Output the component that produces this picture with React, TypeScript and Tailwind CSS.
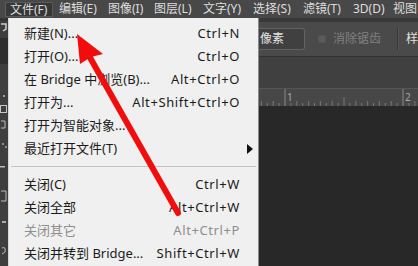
import React from "react";

type Item = { l: string; s?: string; dis?: boolean; sub?: boolean } | "sep";

const items: Item[] = [
  { l: "新建(N)...", s: "Ctrl+N" },
  { l: "打开(O)...", s: "Ctrl+O" },
  { l: "在 Bridge 中浏览(B)...", s: "Alt+Ctrl+O" },
  { l: "打开为...", s: "Alt+Shift+Ctrl+O" },
  { l: "打开为智能对象...", s: "" },
  { l: "最近打开文件(T)", s: "", sub: true },
  "sep",
  { l: "关闭(C)", s: "Ctrl+W" },
  { l: "关闭全部", s: "Alt+Ctrl+W" },
  { l: "关闭其它", s: "Alt+Ctrl+P", dis: true },
  { l: "关闭并转到 Bridge...", s: "Shift+Ctrl+W" },
];

function Ruler() {
  const ticks: React.ReactNode[] = [];
  for (let i = -6; i <= 30; i++) {
    const x = 26 + i * 5.9;
    if (x < 0 || x > 160) continue;
    const m = ((i % 20) + 20) % 20;
    const h = m === 0 ? 17 : m % 10 === 0 ? 9 : m % 2 === 0 ? 5 : 3;
    ticks.push(
      <line key={i} x1={x} x2={x} y1={17 - h} y2={17} stroke={m === 0 ? "#8a8a8a" : "#777"} strokeWidth={1} />
    );
  }
  return (
    <svg width="159" height="17" className="block">
      {ticks}
    </svg>
  );
}

export default function App() {
  const menuTop = ["编辑(E)", "图像(I)", "图层(L)", "文字(Y)", "选择(S)", "滤镜(T)", "3D(D)", "视图"];
  const widths = ["w-[49px]", "w-[46px]", "w-[49px]", "w-[50px]", "w-[50px]", "w-[50px]", "w-[40px]", "w-[24px]"];
  return (
    <div className="relative w-[418px] h-[266px] overflow-hidden bg-[#282828] font-['Noto_Sans','Noto_Sans_CJK_SC',sans-serif]">
      {/* menubar */}
      <div className="flex h-[18px] items-start bg-[#484848] text-[12px] text-[#dedede] whitespace-nowrap">
        <div className="ml-[5px] mt-[2px] flex h-[15px] w-[48px] items-center border border-[#5a5a5a] bg-[#383838] pl-[4px] leading-none">
          文件(F)
        </div>
        <div className="ml-[6px] flex">
          {menuTop.map((t, i) => (
            <div key={t} className={`${widths[i]} flex h-[18px] items-center leading-none`}>
              {t}
            </div>
          ))}
        </div>
      </div>

      <div className="flex h-[248px]">
        {/* left tool strip */}
        <div className="w-[8px] shrink-0 bg-[#3e3e3e]">
          <svg width="8" height="248" className="block">
            <rect x="0" y="0" width="8" height="3" fill="#333" />
            <path d="M1 6 L6 6 L6 11 L3 13" stroke="#cfcfcf" strokeWidth="1.5" fill="none" />
            <rect x="0" y="20" width="8" height="26" fill="#2f2f2f" />
            <circle cx="4" cy="78" r="1" fill="#bbb" />
            <rect x="0.5" y="87.5" width="6" height="7" stroke="#c8c8c8" fill="none" />
            <path d="M1 103 L5 103 L5 110 L1 110" stroke="#bbb" fill="none" />
            <circle cx="3" cy="126" r="1" fill="#aaa" />
            <circle cx="6" cy="129" r="1" fill="#aaa" />
            <rect x="0" y="148" width="5" height="1.5" fill="#bbb" />
            <path d="M1 173 L6 173 L6 183 L1 183" stroke="#bbb" fill="none" />
            <rect x="2" y="203" width="4" height="2" fill="#aaa" />
            <path d="M2 230 Q6 228 5 234 L2 236" stroke="#bbb" fill="none" />
          </svg>
        </div>

        {/* dropdown menu */}
        <div className="w-[251px] shrink-0 border-l border-[#d8d8d8] border-r border-r-[#8a8a8a] bg-[#f0f0f0] pt-[4px] text-[13px] text-[#1b1b1b] whitespace-nowrap">
          {items.map((it, i) =>
            it === "sep" ? (
              <div key={i} className="flex h-[13px] items-center pl-[2px] pr-[2px]">
                <div className="h-px w-full bg-[#c4c4c4]" />
              </div>
            ) : (
              <div
                key={i}
                className={`flex h-[23px] items-center pl-[15px] pr-[5px] leading-none ${it.dis ? "text-[#8e8e8e]" : ""}`}
              >
                <span>{it.l}</span>
                <span className="flex-1" />
                <span className="tracking-[0.6px]">{it.s}</span>
                <span className="flex w-[13px] justify-start pl-[7px]">
                  {it.sub ? (
                    <span className="block h-0 w-0 border-y-[5px] border-l-[6px] border-y-transparent border-l-[#111]" />
                  ) : null}
                </span>
              </div>
            )
          )}
        </div>

        {/* right photoshop area */}
        <div className="flex min-w-0 flex-1 flex-col overflow-hidden">
          <div className="h-[4px] bg-[#383838]" />
          <div className="flex h-[35px] items-center border-b border-[#333] bg-[#4a4a4a] whitespace-nowrap">
            <div className="flex h-[22px] w-[46px] shrink-0 items-center rounded-r-[3px] border border-l-0 border-[#626262] bg-[#404040] pl-[1px] text-[12px] leading-none text-[#e4e4e4]">
              像素
            </div>
            <div className="ml-[13px] h-[8px] w-[8px] shrink-0 rounded-[1px] border border-[#525252] bg-[#5b5b5b]" />
            <div className="ml-[7px] text-[12px] leading-none text-[#808080]">消除锯齿</div>
            <div className="ml-[16px] h-[22px] w-px shrink-0 bg-[#363636]" />
            <div className="h-[22px] w-px shrink-0 bg-[#575757]" />
            <div className="ml-[7px] text-[12px] leading-none text-[#e0e0e0]">样</div>
          </div>
          <div className="h-[31px] bg-[#404040]" />
          <div className="relative h-[18px] border-t border-[#555] bg-[#474747]">
            <Ruler />
            <span className="absolute left-[28px] top-[3px] text-[10px] leading-none text-[#a8a8a8]">1</span>
            <span className="absolute left-[146px] top-[3px] text-[10px] leading-none text-[#a8a8a8]">2</span>
          </div>
          <div className="flex-1 bg-[#282828]" />
        </div>
      </div>

      {/* red annotation arrow */}
      <svg className="pointer-events-none absolute left-0 top-0" width="418" height="266">
        <line x1="88" y1="54" x2="178" y2="213" stroke="#f20d0d" strokeWidth="6" strokeLinecap="round" />
        <polygon points="77,34 80,64 91,57 103,54" fill="#f20d0d" />
      </svg>
    </div>
  );
}
